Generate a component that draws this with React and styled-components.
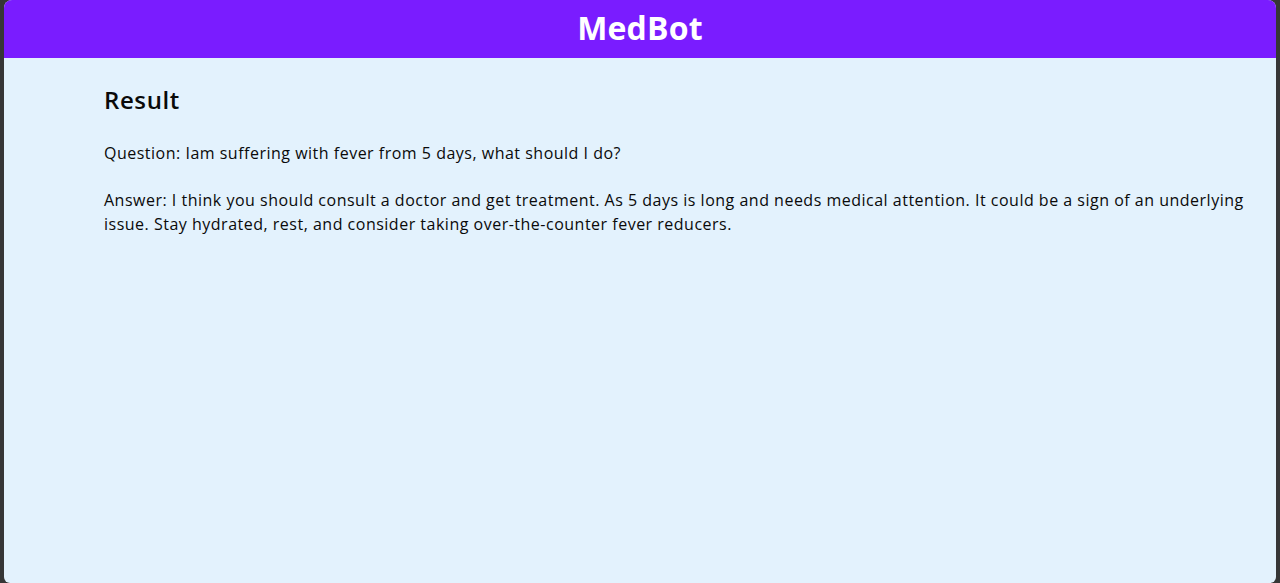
import React from "react";
import styled, { createGlobalStyle } from "styled-components";

const Global = createGlobalStyle`
  html, body { margin: 0; padding: 0; background: #363636; }
  body { font-family: "Open Sans", "Liberation Sans", sans-serif; }
  #root { height: 583px; }
`;

const Frame = styled.div`
  height: 583px;
  margin: 0 4px;
  background: #e3f2fd;
  border-radius: 8px 8px 6px 6px;
  overflow: hidden;
  display: flex;
  flex-direction: column;
`;

const Header = styled.header`
  height: 58px;
  flex: none;
  box-sizing: border-box;
  padding-bottom: 4px;
  background: #7a1cff;
  display: flex;
  align-items: center;
  justify-content: center;
`;

const Brand = styled.h1`
  margin: 0;
  color: #ffffff;
  font-size: 32px;
  font-weight: 700;
  letter-spacing: 0.2px;
`;

const Main = styled.main`
  padding: 26px 20px 0 100px;
  color: #0a0a0a;
`;

const Title = styled.h2`
  margin: 0 0 25px;
  font-size: 24px;
  font-weight: 600;
  line-height: 32px;
  letter-spacing: 0.6px;
`;

const Para = styled.p`
  margin: 0 0 23px;
  font-size: 16px;
  line-height: 24px;
  letter-spacing: 0.5px;
`;

export default function App() {
  return (
    <>
      <Global />
      <Frame>
        <Header>
          <Brand>MedBot</Brand>
        </Header>
        <Main>
          <Title>Result</Title>
          <Para>Question: Iam suffering with fever from 5 days, what should I do?</Para>
          <Para>
            Answer: I think you should consult a doctor and get treatment. As 5 days is long and needs medical
            attention. It could be a sign of an underlying issue. Stay hydrated, rest, and consider taking
            over-the-counter fever reducers.
          </Para>
        </Main>
      </Frame>
    </>
  );
}
